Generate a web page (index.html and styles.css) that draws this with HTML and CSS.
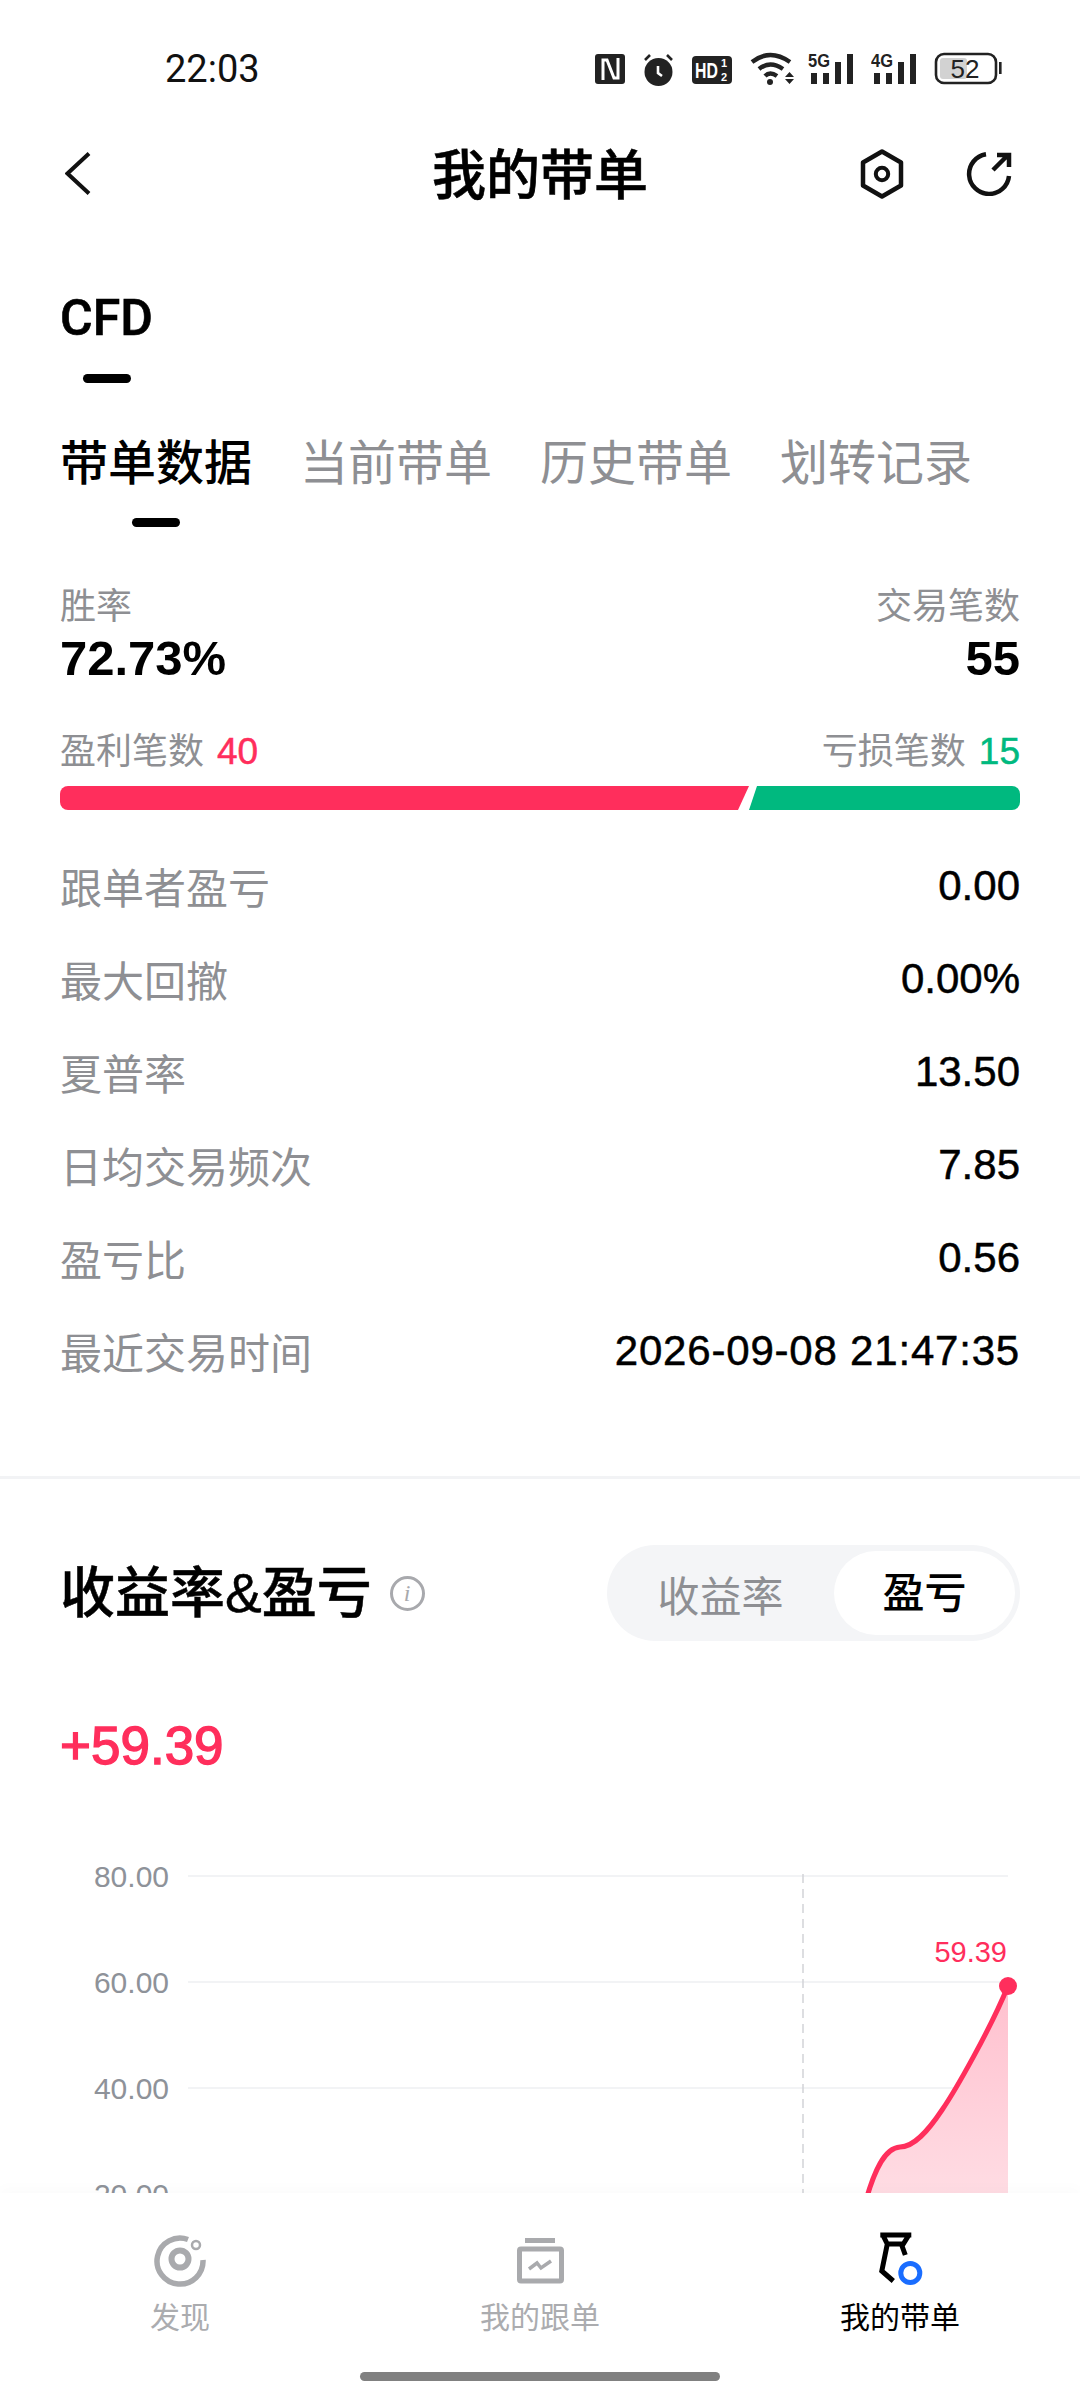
FILE: index.html
```html
<!DOCTYPE html>
<html lang="zh-CN">
<head>
  <meta charset="UTF-8">
  <meta name="viewport" content="width=device-width,initial-scale=1.0">
  <title>我的带单</title>
  <link rel="stylesheet" href="styles.css">
</head>
<body>
  <div class="screen">

    <!-- 状态栏 -->
    <div class="status">
      <span class="clock">22:03</span>
      <div class="status-icons">
        <svg class="si-nfc" viewBox="0 0 30 36"><rect y="3" width="30" height="30" rx="3" fill="#222"/><path d="M8 29V9h4l7 18h4V7" fill="none" stroke="#fff" stroke-width="3"/></svg>
        <svg class="si-alarm" viewBox="0 0 33 36"><circle cx="16.5" cy="21" r="14" fill="#222"/><path d="M3 9l5-5M30 9l-5-5" stroke="#222" stroke-width="2.6"/><path d="M16 15v7l4 3" fill="none" stroke="#fff" stroke-width="2.6"/></svg>
        <svg class="si-hd" viewBox="0 0 40 36"><rect y="5" width="40" height="28" rx="4" fill="#222"/><text transform="translate(3 27) scale(.72 1)" class="si-text-w">HD</text><text x="29" y="16" class="si-small">1</text><text x="29" y="30" class="si-small">2</text></svg>
        <svg class="si-wifi" viewBox="0 0 45 36"><path d="M2 11Q20-3 40 11M9 18Q20 9 33 18M15 25Q20 20 27 25" fill="none" stroke="#222" stroke-width="4.4"/><circle cx="20" cy="31" r="3" fill="#222"/><path d="M35 26l4.500-5 4.500 5zM35 28h9l-4.500 5z" fill="#222"/></svg>
        <svg class="si-signal" viewBox="0 0 46 36"><text x="0" y="16" textLength="22" lengthAdjust="spacingAndGlyphs" class="si-text">5G</text><path d="M3 22h6v11H3zM15 22h6v11h-6zM27 11h6v22h-6zM39 3h6v30h-6z" fill="#222"/></svg>
        <svg class="si-signal" viewBox="0 0 46 36"><text x="0" y="16" textLength="22" lengthAdjust="spacingAndGlyphs" class="si-text">4G</text><path d="M3 22h6v11H3zM15 22h6v11h-6zM27 11h6v22h-6zM39 3h6v30h-6z" fill="#222"/></svg>
        <svg class="si-batt" viewBox="0 0 68 36"><rect x="2" y="3" width="60" height="29" rx="8" fill="none" stroke="#222" stroke-width="2.6"/><rect x="6" y="7" width="27" height="21" rx="3" fill="#d2d2d2"/><text x="31" y="27" text-anchor="middle" class="si-batt-num">52</text><rect x="65" y="11" width="2.600" height="12" fill="#222"/></svg>
      </div>
    </div>

    <!-- 标题 -->
    <div class="nav">
      <svg class="nav-back" viewBox="0 0 26 44"><path d="M24 1.500L2.500 21.500 24 41.500" fill="none" stroke="#111" stroke-width="4"/></svg>
      <h1>我的带单</h1>
      <svg class="nav-hex" viewBox="0 0 44 50"><path d="M22 2.500l19 11v23l-19 11-19-11v-23z" fill="none" stroke="#111" stroke-width="4.500" stroke-linejoin="round"/><circle cx="22" cy="25" r="6.200" fill="none" stroke="#111" stroke-width="4"/></svg>
      <svg class="nav-share" viewBox="0 0 46 44"><path d="M20 2.200A20 20 0 1 0 43 24M27 18L42 3M31 3H43V15" fill="none" stroke="#111" stroke-width="4.500"/></svg>
    </div>

    <div class="market">
      <div class="market-name">CFD</div>
      <div class="market-mark"></div>
    </div>

    <div class="tabs">
      <div class="tab tab-on">带单数据<i></i></div>
      <div class="tab">当前带单</div>
      <div class="tab">历史带单</div>
      <div class="tab">划转记录</div>
    </div>

    <div class="summary">
      <div>
        <div class="sum-label">胜率</div>
        <div class="sum-num">72.73%</div>
      </div>
      <div class="right">
        <div class="sum-label">交易笔数</div>
        <div class="sum-num">55</div>
      </div>
    </div>

    <div class="split">
      <div>盈利笔数 <b class="up">40</b></div>
      <div>亏损笔数 <b class="down">15</b></div>
    </div>
    <div class="ratio">
      <div class="ratio-up"></div>
      <div class="ratio-down"></div>
    </div>

    <div class="rows">
      <div class="row"><span>跟单者盈亏</span><b>0.00</b></div>
      <div class="row"><span>最大回撤</span><b>0.00%</b></div>
      <div class="row"><span>夏普率</span><b>13.50</b></div>
      <div class="row"><span>日均交易频次</span><b>7.85</b></div>
      <div class="row"><span>盈亏比</span><b>0.56</b></div>
      <div class="row"><span>最近交易时间</span><b class="row-date">2026-09-08 21:47:35</b></div>
    </div>

    <div class="divider"></div>

    <div class="chart-head">
      <h2>收益率&amp;盈亏</h2>
      <span class="info">i</span>
      <div class="toggle">
        <span>收益率</span>
        <span class="toggle-on">盈亏</span>
      </div>
    </div>

    <div class="total">+59.39</div>

    <svg class="chart" viewBox="0 1860 1080 340">
      <defs>
        <linearGradient id="area" x1="0" y1="0" x2="0" y2="1">
          <stop offset="0" stop-color="#ffc0ce"/>
          <stop offset="1" stop-color="#ffdde4"/>
        </linearGradient>
      </defs>
      <g stroke="#f2f3f5" stroke-width="2">
        <path d="M188 1876H1008M188 1982H1008M188 2088H1008M188 2194H1008"/>
      </g>
      <path d="M803 1874V2200" stroke="#d2d4d8" stroke-width="1.500" stroke-dasharray="9 6"/>
      <g class="axis">
        <text x="169" y="1887">80.00</text>
        <text x="169" y="1993">60.00</text>
        <text x="169" y="2099">40.00</text>
        <text x="169" y="2205">20.00</text>
      </g>
      <path d="M866 2200C874 2172 884 2148 900 2147C914 2147 928 2131 942 2110C955 2091 990 2030 1008 1986V2200Z" fill="url(#area)"/>
      <path d="M866 2200C874 2172 884 2148 900 2147C914 2147 928 2131 942 2110C955 2091 990 2030 1008 1986" fill="none" stroke="#ff2e5c" stroke-width="5"/>
      <circle cx="1008" cy="1986" r="9" fill="#ff2e5c"/>
      <text x="1007" y="1962" text-anchor="end" class="point-label">59.39</text>
    </svg>

    <!-- 底部导航 -->
    <div class="tabbar">
      <div class="tb-items">
        <div class="tb-item">
          <svg class="tb-icon" width="52" height="56" viewBox="0 0 52 56"><path d="M34 8.500A23 23 0 1 0 49 29" fill="none" stroke="#a9aaad" stroke-width="5.500"/><circle cx="42" cy="14" r="4" fill="none" stroke="#a9aaad" stroke-width="2.500"/><circle cx="26" cy="28" r="8.500" fill="none" stroke="#a9aaad" stroke-width="6"/></svg>
          <span>发现</span>
        </div>
        <div class="tb-item">
          <svg class="tb-icon" width="48" height="56" viewBox="0 0 48 56"><path d="M9 7h30v5H9z" fill="#a9aaad"/><rect x="3.500" y="18" width="42" height="32" rx="1.500" fill="none" stroke="#a9aaad" stroke-width="5"/><path d="M13 38l8-6 4 5 10-7" fill="none" stroke="#a9aaad" stroke-width="3.500"/></svg>
          <span>我的跟单</span>
        </div>
        <div class="tb-item tb-on">
          <svg class="tb-icon" width="46" height="56" viewBox="-1.300 0 46 56"><path d="M2 4H33M5 5L9 13H25L30 5M9 13L3.500 40 15 50M23 13L27 24" fill="none" stroke="#000" stroke-width="5"/><circle cx="32" cy="42" r="9.500" fill="#fff" stroke="#1a6dff" stroke-width="5"/></svg>
          <span>我的带单</span>
        </div>
      </div>
      <div class="home-bar"></div>
    </div>

  </div>
</body>
</html>
```

FILE: styles.css
```css
* {
  box-sizing: border-box;
}

body {
  margin: 0;
  padding: 0;
  background-color: #ffffff;
  color: #000000;
  font-family: "Liberation Sans", "Noto Sans CJK SC", sans-serif;
}

.screen {
  position: relative;
  width: 1080px;
  height: 2400px;
  overflow: hidden;
  padding: 0 60px;
}

/* status bar */
.status {
  display: flex;
  align-items: center;
  justify-content: space-between;
  height: 138px;
  padding: 0 18px 0 105px;
}
.clock {
  font-family: Roboto, sans-serif;
  font-size: 38px;
  color: #111;
}
.status-icons {
  display: flex;
  align-items: center;
}
.status-icons svg {
  display: block;
  height: 36px;
}
.si-nfc { width: 30px; margin-right: 17px; }
.si-alarm { width: 33px; margin-right: 17px; }
.si-hd { width: 40px; margin-right: 18px; }
.si-wifi { width: 45px; margin-right: 13px; }
.si-signal { width: 46px; margin-right: 17px; }
.si-batt { width: 68px; }
.si-text {
  font-size: 19px;
  font-weight: 700;
  fill: #222;
}
.si-text-w {
  font-size: 22px;
  font-weight: 700;
  fill: #fff;
}
.si-small {
  font-size: 11px;
  font-weight: 700;
  fill: #fff;
}
.si-batt-num {
  font-size: 26px;
  fill: #222;
}

/* title */
.nav {
  position: relative;
  display: flex;
  align-items: center;
  height: 72px;
}
.nav h1 {
  position: absolute;
  left: 0;
  right: 0;
  top: 0;
  margin: 0;
  font-size: 54px;
  font-weight: 500;
  -webkit-text-stroke: 0.6px #000;
  line-height: 76px;
  text-align: center;
}
.nav-back {
  width: 26px;
  height: 44px;
  margin-left: 5px;
}
.nav-hex {
  width: 44px;
  height: 50px;
  margin-left: auto;
}
.nav-share {
  width: 46px;
  height: 44px;
  margin-left: 62px;
  margin-right: 8px;
}

.market {
  margin-top: 72px;
}
.market-name {
  font-family: Roboto, sans-serif;
  font-size: 50px;
  font-weight: 500;
  -webkit-text-stroke: 0.6px #000;
  line-height: 72px;
}
.market-mark {
  width: 48px;
  height: 9px;
  margin: 20px 0 0 23px;
  border-radius: 5px;
  background-color: #000;
}

/* tabs */
.tabs {
  display: flex;
  gap: 48px;
  margin-top: 51px;
}
.tab {
  position: relative;
  font-size: 48px;
  line-height: 60px;
  color: #8e8f93;
}
.tab-on {
  color: #000;
  font-weight: 500;
}
.tab-on i {
  position: absolute;
  left: 72px;
  top: 84px;
  width: 48px;
  height: 9px;
  border-radius: 5px;
  background-color: #000;
}

.summary {
  display: flex;
  justify-content: space-between;
  margin-top: 91px;
}
.right {
  text-align: right;
}
.sum-label {
  font-size: 36px;
  line-height: 44px;
  color: #8e8f93;
}
.sum-num {
  font-size: 49px;
  font-weight: 700;
  line-height: 59px;
}

.split {
  display: flex;
  justify-content: space-between;
  margin-top: 42px;
  font-size: 36px;
  line-height: 44px;
  color: #8e8f93;
}
.split b {
  margin-left: 3px;
  font-size: 37px;
  font-weight: 400;
  -webkit-text-stroke: 0.5px;
}
.up {
  color: #ff2e5c;
}
.down {
  color: #00b97f;
}

.ratio {
  display: flex;
  height: 24px;
  margin-top: 12px;
}
.ratio-up {
  width: 689px;
  border-radius: 8px 0 0 8px;
  background-color: #ff2e5c;
  clip-path: polygon(0 0, 100% 0, calc(100% - 11px) 100%, 0 100%);
}
.ratio-down {
  flex: 1;
  border-radius: 0 8px 8px 0;
  background-color: #00b97f;
  clip-path: polygon(8px 0, 100% 0, 100% 100%, 0 100%);
}

.rows {
  margin-top: 29px;
}
.row {
  display: flex;
  align-items: center;
  justify-content: space-between;
  height: 93px;
}
.row span {
  font-size: 42px;
  color: #8e8f93;
}
.row b {
  font-size: 42px;
  font-weight: 400;
  -webkit-text-stroke: 0.5px #000;
  color: #000;
}
.row .row-date {
  letter-spacing: 0.8px;
}

.divider {
  height: 3px;
  margin: 79px -60px 0;
  background-color: #f2f3f5;
}

/* chart */
.chart-head {
  display: flex;
  align-items: center;
  margin-top: 66px;
}
.chart-head h2 {
  margin: 0;
  font-size: 55px;
  font-weight: 500;
  -webkit-text-stroke: 0.5px #000;
  line-height: 60px;
}
.info {
  width: 35px;
  height: 35px;
  margin-left: 18px;
  border: 3px solid #a8a9ad;
  border-radius: 50%;
  color: #a8a9ad;
  font-family: "Liberation Serif", serif;
  font-size: 24px;
  font-style: italic;
  line-height: 28px;
  text-align: center;
}
.toggle {
  display: flex;
  align-items: center;
  width: 413px;
  height: 96px;
  margin-left: auto;
  padding: 6px 5px 6px 0;
  border-radius: 48px;
  background-color: #f4f5f7;
  font-size: 42px;
  color: #8e8f93;
}
.toggle span {
  flex: 1;
  text-align: center;
}
.toggle .toggle-on {
  flex: none;
  width: 181px;
  height: 84px;
  border-radius: 42px;
  background-color: #fff;
  color: #000;
  font-weight: 500;
  line-height: 86px;
}

.total {
  margin-top: 75px;
  font-size: 53px;
  font-weight: 400;
  -webkit-text-stroke: 1.4px #ff2e5c;
  line-height: 60px;
  color: #ff2e5c;
}

.chart {
  display: block;
  width: 1080px;
  height: 340px;
  margin: 84px 0 0 -60px;
}
.axis text {
  font-size: 30px;
  fill: #8e9299;
  text-anchor: end;
}
.point-label {
  font-size: 29px;
  fill: #ff2e5c;
}

/* bottom tabs */
.tabbar {
  position: absolute;
  left: 0;
  right: 0;
  bottom: 0;
  height: 207px;
  padding-top: 38px;
  background-color: #fff;
  box-shadow: 0 -6px 12px rgba(0, 0, 0, 0.015);
}
.tb-items {
  display: grid;
  grid-template-columns: repeat(3, 360px);
}
.tb-item {
  display: flex;
  flex-direction: column;
  align-items: center;
  font-size: 30px;
  line-height: 40px;
  color: #abacaf;
}
.tb-icon {
  display: block;
  margin-bottom: 11px;
}
.tb-on {
  color: #000;
}
.home-bar {
  width: 360px;
  height: 9px;
  margin: 34px auto 0;
  border-radius: 5px;
  background-color: #808080;
}
```
